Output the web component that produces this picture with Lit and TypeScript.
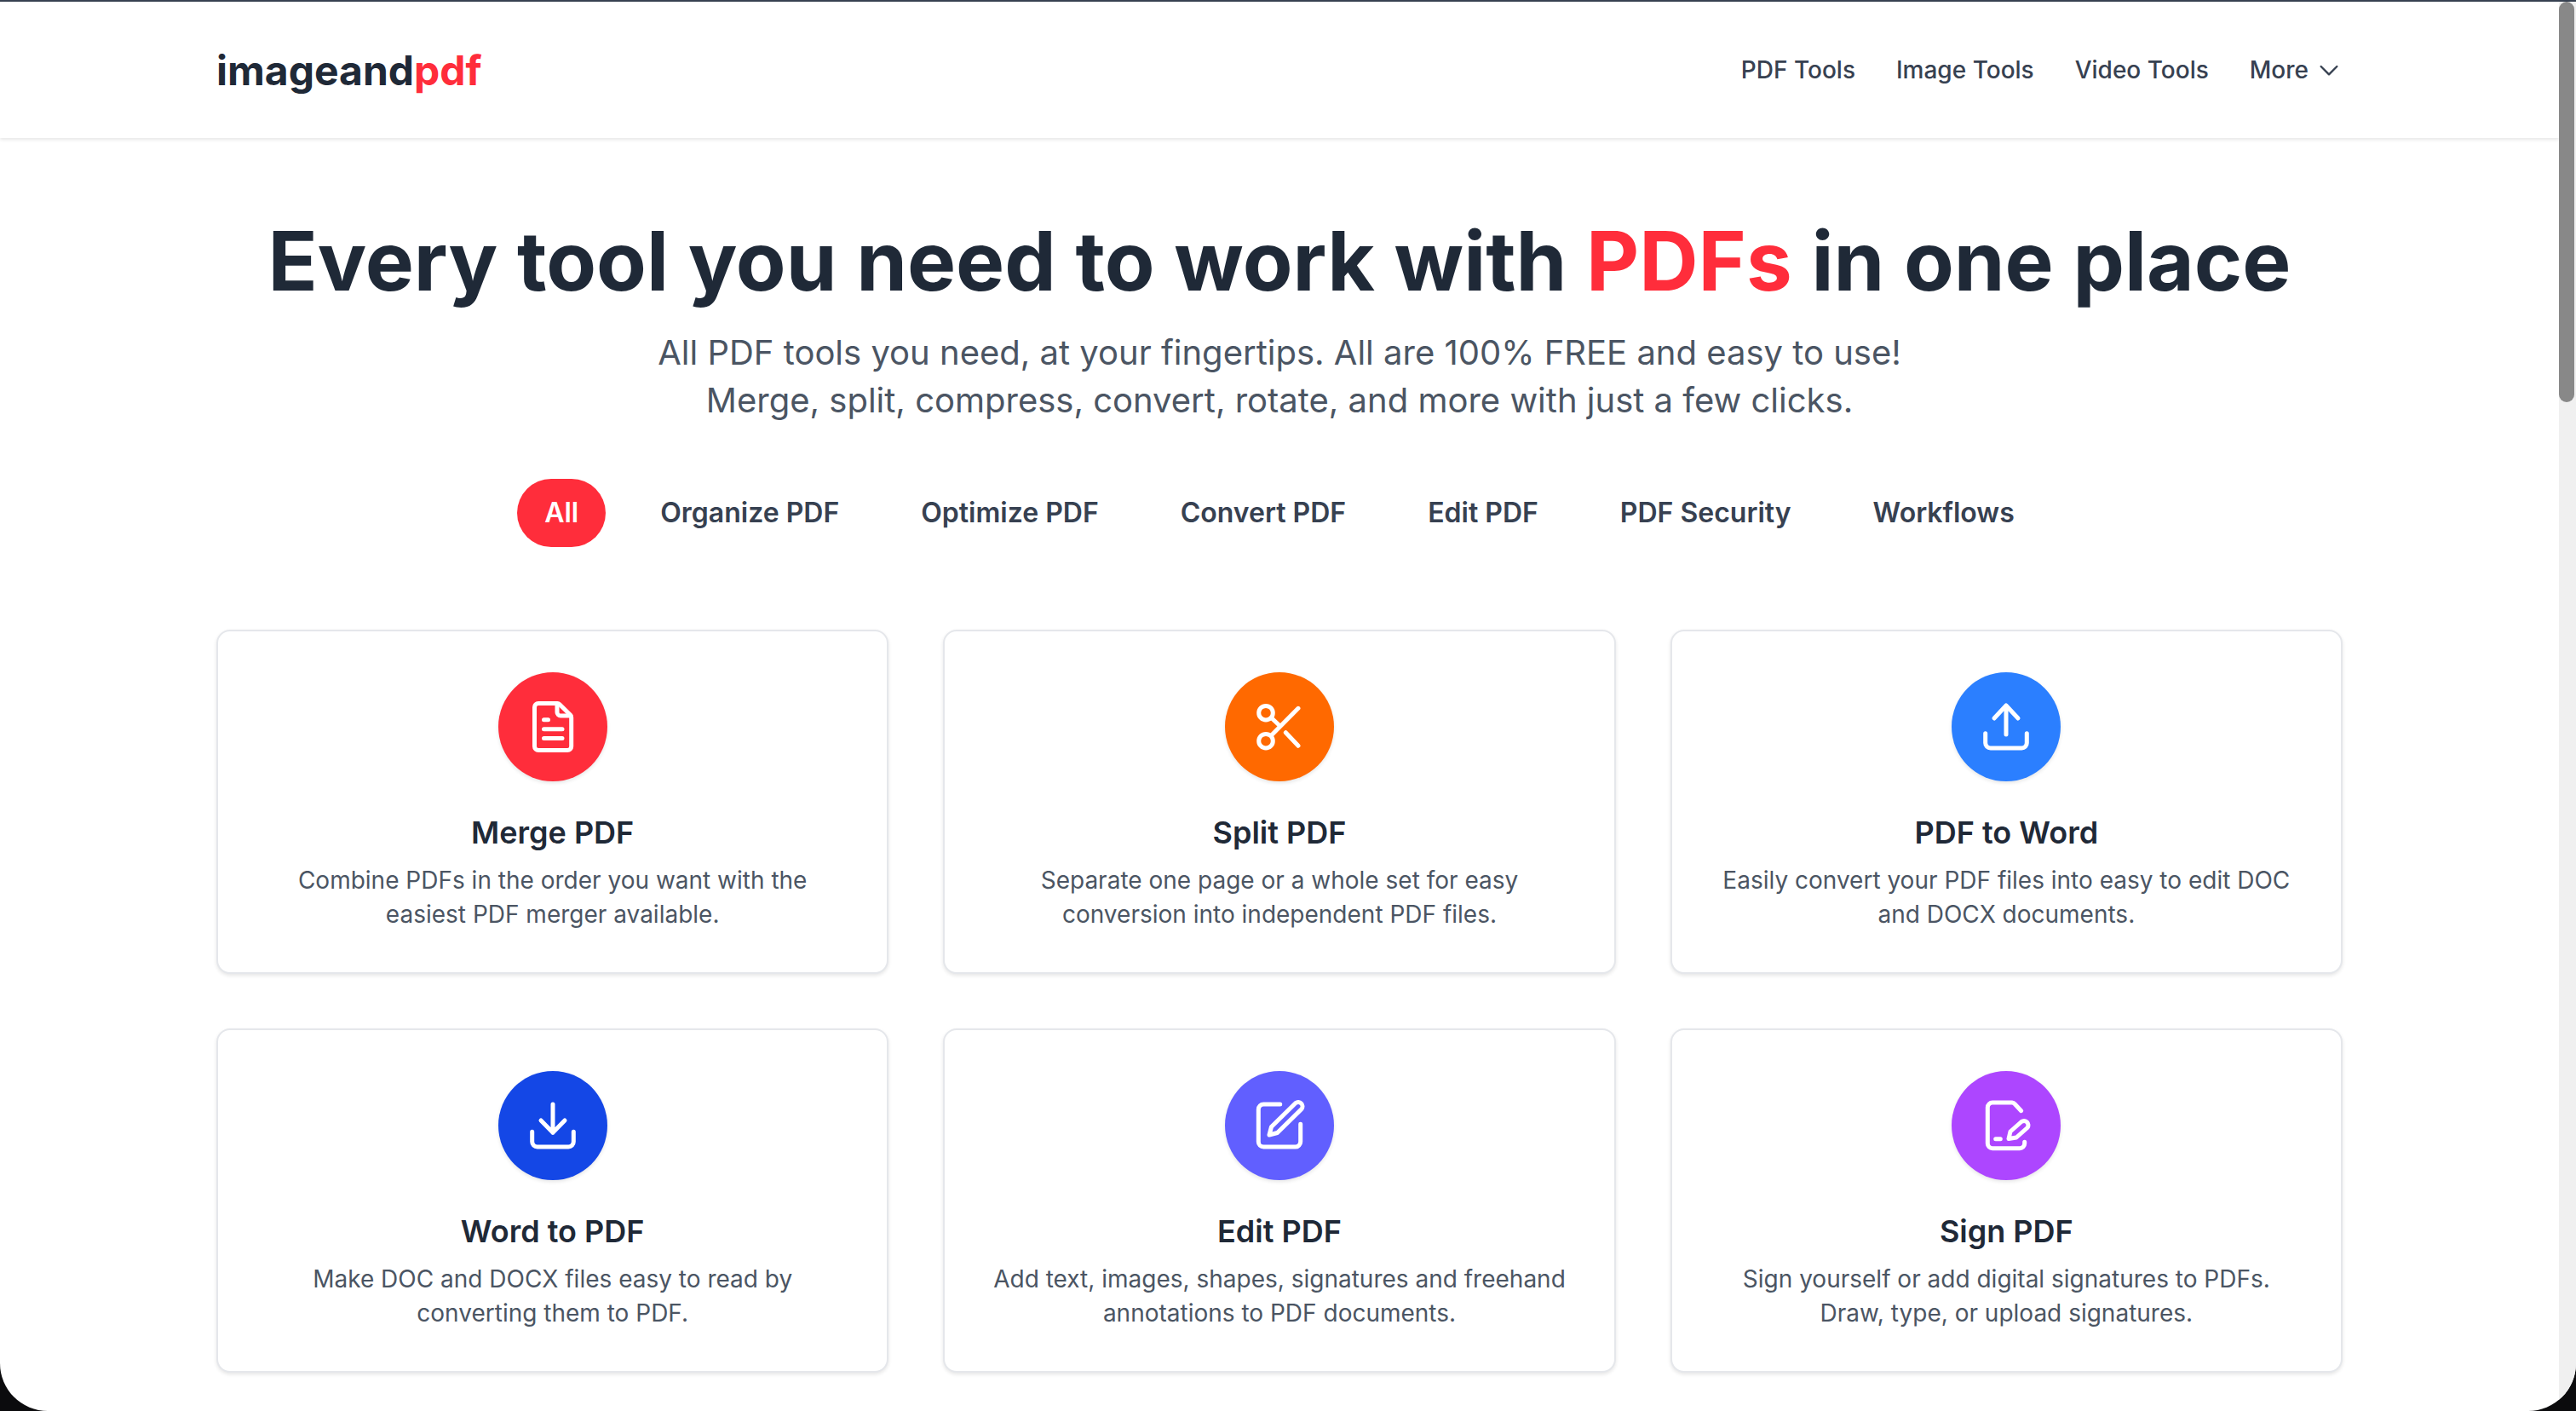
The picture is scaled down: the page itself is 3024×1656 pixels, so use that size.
import { LitElement, css, html, svg } from "lit";
import { customElement } from "lit/decorators.js";

// icon paths are drawn around the centre of a 64 box (viewBox -32 -32 64 64)
const icons = {
  file: svg`<path d="M-17 -27.5H5a4 4 0 0 1 3 1.2L20.5 -14a4 4 0 0 1 1.2 3V23a4.5 4.5 0 0 1-4.5 4.5H-17a4.5 4.5 0 0 1-4.5-4.5V-23a4.5 4.5 0 0 1 4.5-4.5Z" /><path d="M5 -27V-17a4 4 0 0 0 4 4H21" /><path d="M-10.5 -8.3H-5.5M-10.5 2.7H11M-10.5 13.5H11" />`,
  scissors: svg`<circle cx="-16" cy="-16.3" r="8.3" /><circle cx="-16" cy="16.7" r="8.3" /><path d="M-9.5 10L22 -21.7M-9.5 -10.5L-0.5 -2M7.3 6.7L22 22.3" />`,
  upload: svg`<path d="M0 9V-25M-14 -10L0 -25L14 -10" /><path d="M-24.3 7.7V19a6 6 0 0 0 6 6H18.3a6 6 0 0 0 6-6V7.7" />`,
  download: svg`<path d="M0 -25V8.3M-14 -6L0 8.3L14 -6" /><path d="M-24.3 7.3V19a6 6 0 0 0 6 6H18.3a6 6 0 0 0 6-6V7.3" />`,
  edit: svg`<path d="M0.7 -25H-18.7a6 6 0 0 0-6 6V19a6 6 0 0 0 6 6H18.7a6 6 0 0 0 6-6V-1.7" /><path d="M-12 11L-9.5 1.5L19 -26.5a5 5 0 0 1 7 7L-2.5 8.5Z" />`,
  sign: svg`<path d="M17.7 -17.3L10 -25.5a4 4 0 0 0-3-1.5H-16a5.7 5.7 0 0 0-5.7 5.7V21a5.7 5.7 0 0 0 5.7 5.7H16a5.7 5.7 0 0 0 5.7-5.7V19.3" /><path d="M-12.3 15.7H-6.7" /><path d="M3 15.5L5 7L18 -4.5a5 5 0 0 1 7 7L12 14Z" />`,
};

const tabs = ["All", "Organize PDF", "Optimize PDF", "Convert PDF", "Edit PDF", "PDF Security", "Workflows"];

const tools = [
  { name: "Merge PDF", text: "Combine PDFs in the order you want with the easiest PDF merger available.", color: "#ff2d3b", icon: icons.file },
  { name: "Split PDF", text: "Separate one page or a whole set for easy conversion into independent PDF files.", color: "#ff6900", icon: icons.scissors },
  { name: "PDF to Word", text: "Easily convert your PDF files into easy to edit DOC and DOCX documents.", color: "#2b7fff", icon: icons.upload },
  { name: "Word to PDF", text: "Make DOC and DOCX files easy to read by converting them to PDF.", color: "#1447e6", icon: icons.download },
  { name: "Edit PDF", text: "Add text, images, shapes, signatures and freehand annotations to PDF documents.", color: "#615fff", icon: icons.edit },
  { name: "Sign PDF", text: "Sign yourself or add digital signatures to PDFs. Draw, type, or upload signatures.", color: "#ad46ff", icon: icons.sign },
];

@customElement("app-root")
export class AppRoot extends LitElement {
  protected render(): unknown {
    return html`
      <div class="window">
        <div class="page">
          <header>
            <div class="bar">
              <a class="logo">imageand<span>pdf</span></a>
              <nav>
                <a>PDF Tools</a>
                <a>Image Tools</a>
                <a>Video Tools</a>
                <a class="more">More
                  <svg viewBox="0 0 24 24"><path d="M19 9l-7 7-7-7" /></svg>
                </a>
              </nav>
            </div>
          </header>
          <main>
            <h1>Every tool you need to work with <span>PDFs</span> in one place</h1>
            <p class="sub">All PDF tools you need, at your fingertips. All are 100% FREE and easy to use!<br />Merge, split, compress, convert, rotate, and more with just a few clicks.</p>
            <div class="tabs">
              ${tabs.map((t, i) => html`<button class=${i === 0 ? "tab active" : "tab"}>${t}</button>`)}
            </div>
            <div class="grid">
              ${tools.map(
                (t) => html`
                  <div class="card">
                    <div class="circle" style="background:${t.color}">
                      <svg viewBox="-32 -32 64 64">${t.icon}</svg>
                    </div>
                    <h3>${t.name}</h3>
                    <p>${t.text}</p>
                  </div>
                `
              )}
            </div>
          </main>
        </div>
        <div class="scrollbar"><div class="thumb"></div></div>
      </div>
    `;
  }

  static styles = css`
    :host {
      display: block;
      background: #0b0b0d;
      font-family: Inter, "Noto Sans", sans-serif;
    }

    .window {
      display: flex;
      height: 1656px;
      overflow: hidden;
      background: #fff;
      border-top: 2px solid #374151;
      box-sizing: border-box;
      border-radius: 0 0 56px 56px;
    }

    .page {
      flex: 1;
      min-width: 0;
    }

    header {
      height: 160px;
      background: #fff;
      box-shadow: 0 2px 4px rgba(0, 0, 0, 0.1);
    }

    .bar {
      width: 2496px;
      height: 100%;
      margin: 0 auto;
      display: flex;
      align-items: center;
      justify-content: space-between;
    }

    .logo {
      font-weight: 700;
      font-size: 48px;
      color: #1f2937;
    }

    .logo span,
    h1 span {
      color: #ff2d3b;
    }

    nav {
      display: flex;
      align-items: center;
      gap: 48px;
      font-size: 28px;
      font-weight: 500;
      color: #374151;
    }

    .more {
      display: flex;
      align-items: center;
      gap: 8px;
    }

    .more svg {
      width: 32px;
      height: 32px;
      fill: none;
      stroke: #374151;
      stroke-width: 1.8;
      stroke-linecap: round;
      stroke-linejoin: round;
    }

    main {
      width: 2496px;
      margin: 0 auto;
      padding-top: 96px;
    }

    h1 {
      margin: 0 0 32px;
      text-align: center;
      font-size: 96px;
      line-height: 96px;
      font-weight: 700;
      color: #1f2937;
    }

    .sub {
      margin: 0 0 64px;
      text-align: center;
      font-size: 40px;
      line-height: 56px;
      color: #4b5563;
    }

    .tabs {
      display: flex;
      justify-content: center;
      gap: 32px;
      margin-bottom: 97px;
    }

    .tab {
      padding: 16px 32px;
      border: 0;
      border-radius: 9999px;
      background: none;
      font: 600 32px/48px Inter, "Noto Sans", sans-serif;
      color: #374151;
    }

    .tab.active {
      background: #ff2d3b;
      color: #fff;
    }

    .grid {
      display: grid;
      grid-template-columns: repeat(3, 1fr);
      gap: 64px;
    }

    .card {
      box-sizing: border-box;
      padding: 48px;
      display: flex;
      flex-direction: column;
      align-items: center;
      text-align: center;
      background: #fff;
      border: 2px solid #e5e7eb;
      border-radius: 16px;
      box-shadow: 0 2px 4px rgba(0, 0, 0, 0.1);
    }

    .circle {
      width: 128px;
      height: 128px;
      border-radius: 50%;
      display: flex;
      align-items: center;
      justify-content: center;
      margin-bottom: 32px;
      box-shadow: 0 2px 4px rgba(0, 0, 0, 0.1);
    }

    .circle svg {
      width: 64px;
      height: 64px;
      overflow: visible;
      fill: none;
      stroke: #fff;
      stroke-width: 5;
      stroke-linecap: round;
      stroke-linejoin: round;
    }

    h3 {
      margin: 0 0 8px;
      font-size: 36px;
      line-height: 56px;
      font-weight: 600;
      color: #1f2937;
    }

    .card p {
      margin: 0;
      font-size: 28px;
      line-height: 40px;
      color: #4b5563;
    }

    .scrollbar {
      width: 20px;
      flex: none;
      background: #f0f0f0;
    }

    .thumb {
      width: 18px;
      height: 470px;
      border-radius: 9px;
      background: #888;
    }
  `;
}

declare global {
  interface HTMLElementTagNameMap {
    "app-root": AppRoot;
  }
}
